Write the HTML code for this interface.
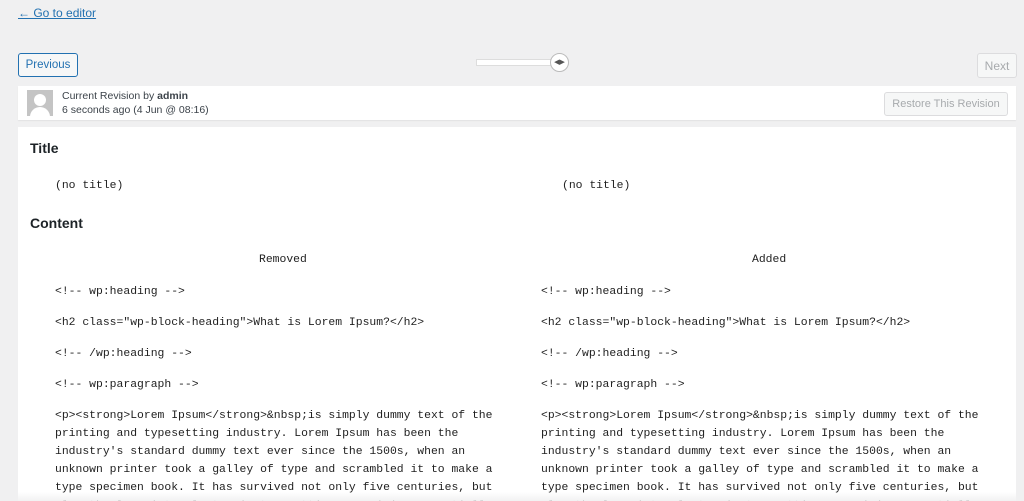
<!DOCTYPE html>
<html><head><meta charset="utf-8"><style>
*{margin:0;padding:0;box-sizing:border-box}
html{overflow:hidden;height:501px}
body{width:1024px;height:501px;overflow:hidden;background:#f0f0f1;font-family:"Liberation Sans",sans-serif;font-size:13px;color:#3c434a;position:relative}
.a{position:absolute}
a{color:#2271b1}
.mono{font-family:"Liberation Mono",monospace;font-size:11.4px;line-height:18px;color:#1e1e1e;white-space:pre}
.btn{position:absolute;border:1px solid;border-radius:3px;font-size:12px;display:flex;align-items:center;justify-content:center}
</style></head><body>
<a class="a" href="#" style="left:18px;top:6px;font-size:12px;text-decoration:underline">← Go to editor</a>
<div class="btn" style="left:18px;top:53px;width:60px;height:24px;border-color:#2271b1;color:#2271b1;background:#f6f7f7;font-size:11.5px">Previous</div>
<div class="a" style="left:476px;top:59px;width:80px;height:7px;background:#fff;border:1px solid #ddd"></div>
<div class="a" style="left:550px;top:53px;width:19px;height:19px;border-radius:50%;background:#fff;border:1px solid #bbb;font-size:7px;line-height:17px;text-align:center;color:#555">◀▶</div>
<div class="btn" style="left:977px;top:53px;width:40px;height:25px;border-color:#dcdcde;color:#a7aaad;background:#f6f7f7">Next</div>
<div class="a" style="left:18px;top:86px;width:998px;height:34px;background:#fff;box-shadow:0 1px 1px rgba(0,0,0,.06)"></div>
<div class="a" style="left:27px;top:90px;width:26px;height:26px;background:#c4c4c4;overflow:hidden">
<div class="a" style="left:7px;top:4px;width:12px;height:12px;border-radius:50%;background:#fff"></div>
<div class="a" style="left:3px;top:17px;width:20px;height:14px;border-radius:10px 10px 0 0;background:#fff"></div></div>
<div class="a" style="left:62px;top:89px;font-size:10.5px;line-height:14px">Current Revision by <b>admin</b><br>6 seconds ago (4 Jun @ 08:16)</div>
<div class="btn" style="left:884px;top:92px;width:124px;height:24px;border-color:#dcdcde;color:#a7aaad;background:#f6f7f7;font-size:11px">Restore This Revision</div>
<div class="a" style="left:18px;top:127px;width:998px;height:374px;background:#fff"></div>
<div class="a" style="left:30px;top:140px;font-size:14px;font-weight:bold;color:#1d2327">Title</div>
<div class="a mono" style="left:55px;top:177px">(no title)</div>
<div class="a mono" style="left:562px;top:177px">(no title)</div>
<div class="a" style="left:30px;top:215px;font-size:14px;font-weight:bold;color:#1d2327">Content</div>
<div class="a mono" style="left:259px;top:251px">Removed</div>
<div class="a mono" style="left:752px;top:251px">Added</div>
<div class="a mono" style="left:55px;top:277px;line-height:31px">&lt;!-- wp:heading --&gt;
&lt;h2 class="wp-block-heading"&gt;What is Lorem Ipsum?&lt;/h2&gt;
&lt;!-- /wp:heading --&gt;
&lt;!-- wp:paragraph --&gt;</div>
<div class="a mono" style="left:541px;top:277px;line-height:31px">&lt;!-- wp:heading --&gt;
&lt;h2 class="wp-block-heading"&gt;What is Lorem Ipsum?&lt;/h2&gt;
&lt;!-- /wp:heading --&gt;
&lt;!-- wp:paragraph --&gt;</div>
<div class="a mono" style="left:55px;top:407px">&lt;p&gt;&lt;strong&gt;Lorem Ipsum&lt;/strong&gt;&amp;nbsp;is simply dummy text of the
printing and typesetting industry. Lorem Ipsum has been the
industry's standard dummy text ever since the 1500s, when an
unknown printer took a galley of type and scrambled it to make a
type specimen book. It has survived not only five centuries, but
also the leap into electronic typesetting, remaining essentially</div>
<div class="a mono" style="left:541px;top:407px">&lt;p&gt;&lt;strong&gt;Lorem Ipsum&lt;/strong&gt;&amp;nbsp;is simply dummy text of the
printing and typesetting industry. Lorem Ipsum has been the
industry's standard dummy text ever since the 1500s, when an
unknown printer took a galley of type and scrambled it to make a
type specimen book. It has survived not only five centuries, but
also the leap into electronic typesetting, remaining essentially</div>
<div class="a" style="left:0;top:492px;width:1024px;height:9px;background:linear-gradient(rgba(255,255,255,0),rgba(240,240,241,.9))"></div>
</body></html>
